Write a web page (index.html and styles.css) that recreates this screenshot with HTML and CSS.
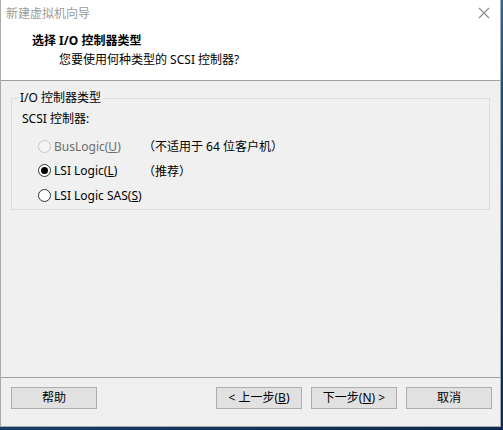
FILE: index.html
```html
<!DOCTYPE html>
<html lang="zh-CN">
<head>
    <meta charset="UTF-8">
    <title>新建虚拟机向导</title>
    <link rel="stylesheet" href="styles.css">
</head>
<body>
    <div class="window">
        <div class="titlebar">
            <span class="title">新建虚拟机向导</span>
            <svg class="close" width="12" height="12" viewBox="0 0 12 12">
                <path d="M1 1L11 11M11 1L1 11" stroke="#8a8a8a" stroke-width="1.1" fill="none"/>
            </svg>
        </div>
        <div class="header">
            <div class="head-title">选择 I/O 控制器类型</div>
            <div class="head-sub">您要使用何种类型的 SCSI 控制器?</div>
        </div>
        <div class="content">
            <fieldset class="group">
                <legend>I/O 控制器类型</legend>
                <div class="label">SCSI 控制器:</div>
                <div class="options">
                    <div class="row disabled">
                        <span class="radio"></span>
                        <span class="opt">BusLogic(<u>U</u>)</span>
                        <span class="note">（不适用于 64 位客户机）</span>
                    </div>
                    <div class="row">
                        <span class="radio checked"></span>
                        <span class="opt">LSI Logic(<u>L</u>)</span>
                        <span class="note">（推荐）</span>
                    </div>
                    <div class="row">
                        <span class="radio"></span>
                        <span class="opt">LSI Logic SAS(<u>S</u>)</span>
                    </div>
                </div>
            </fieldset>
        </div>
        <div class="footer">
            <button class="btn">帮助</button>
            <div class="spacer"></div>
            <button class="btn">&lt; 上一步(<u>B</u>)</button>
            <button class="btn">下一步(<u>N</u>) &gt;</button>
            <button class="btn">取消</button>
        </div>
    </div>
</body>
</html>
```

FILE: styles.css
```css
html, body{
    margin: 0;
    height: 100%;
}
body{
    background: linear-gradient(160deg, #5aa3bb 0%, #1d4f7c 45%, #0c2a4d 100%);
    font-family: "Noto Sans", "Noto Sans CJK SC", sans-serif;
    font-size: 12px;
    color: #000;
}
.window{
    width: 499px;
    height: 426px;
    background: #f0f0f0;
    border: 1px solid #a9a9a9;
    border-top: none;
    display: flex;
    flex-direction: column;
}
.titlebar{
    height: 30px;
    background: #fff;
    display: flex;
    align-items: center;
    justify-content: space-between;
    padding: 0 10px 0 5px;
}
.title{
    color: #9a9a9a;
    font-size: 12px;
    margin-top: -4px;
}
.close{
    margin-top: -4px;
}
.header{
    height: 50px;
    background: #fff;
    border-bottom: 1px solid #a0a0a0;
    padding-left: 31px;
}
.head-title{
    font-weight: bold;
    line-height: 18px;
    margin-top: 2px;
}
.head-sub{
    padding-left: 27px;
    line-height: 18px;
    margin-top: 1px;
}
.content{
    flex: 1;
    padding: 9px 10px 0 10px;
    border-bottom: 1px solid #a0a0a0;
}
.group{
    margin: 0;
    border: 1px solid #dcdcdc;
    padding: 4px 10px 0 10px;
    height: 114px;
}
.group legend{
    padding: 0 2px;
    margin-left: -4px;
    line-height: 16px;
}
.label{
    line-height: 18px;
}
.options{
    margin-top: 6px;
}
.row{
    display: flex;
    align-items: center;
    height: 24.5px;
    padding-left: 16px;
}
.radio{
    width: 11px;
    height: 11px;
    border: 1px solid #333;
    border-radius: 50%;
    background: #fff;
    margin-right: 3px;
    position: relative;
}
.radio.checked::after{
    content: "";
    position: absolute;
    left: 2px;
    top: 2px;
    width: 7px;
    height: 7px;
    border-radius: 50%;
    background: #000;
}
.row.disabled .radio{
    border-color: #c6c6c6;
    background: #f4f4f4;
}
.row.disabled .opt{
    color: #6d6d6d;
}
.opt{
    width: 89px;
}
.footer{
    height: 39px;
    display: flex;
    align-items: flex-start;
    padding: 9px 8px 0 10px;
    gap: 9px;
}
.spacer{
    flex: 1;
}
.btn{
    width: 86px;
    height: 22px;
    background: #e1e1e1;
    border: 1px solid #adadad;
    font-family: "Noto Sans", "Noto Sans CJK SC", sans-serif;
    font-size: 12px;
    color: #000;
    padding: 0;
    line-height: 18px;
}
```
